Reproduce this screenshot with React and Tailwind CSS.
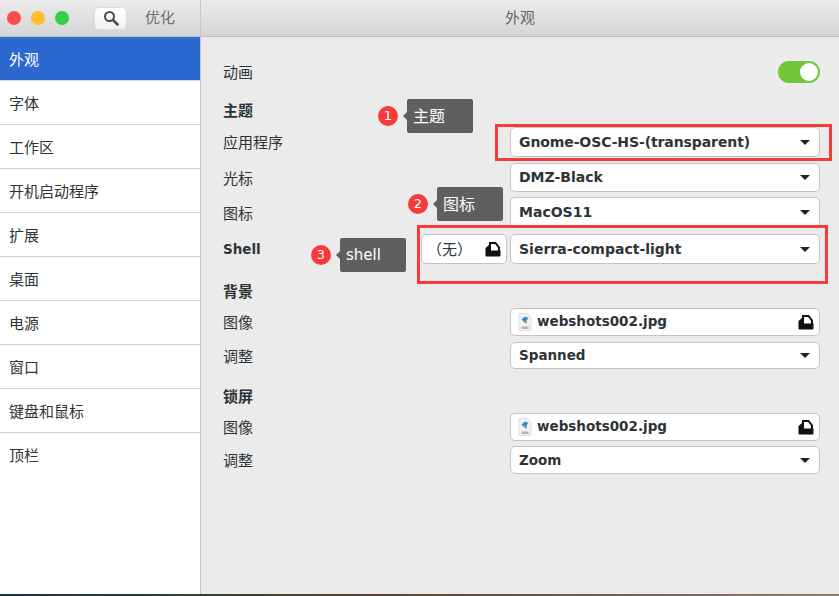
import React from "react";

const sidebarItems = ["外观", "字体", "工作区", "开机启动程序", "扩展", "桌面", "电源", "窗口", "键盘和鼠标", "顶栏"];
const font = "font-['DejaVu_Sans','Noto_Sans_CJK_SC',sans-serif]";

function OpenIcon() {
  return (
    <svg width="16" height="15" viewBox="0 0 16 15" className="shrink-0">
      <path d="M5 9V1h5.500L14 5.500V9" fill="#fff" stroke="#111" strokeWidth="2" />
      <path d="M.5 8.500h15V13.500a1 1 0 0 1-1 1H1.500a1 1 0 0 1-1-1z" fill="#111" />
      <path d="M.5 9V6L4 3v6z" fill="#111" />
    </svg>
  );
}

function FileIcon() {
  return (
    <svg width="14" height="18" viewBox="0 0 14 18" className="shrink-0">
      <path d="M1 .5h8.500L13 4v13.500H1z" fill="#f3f3f3" stroke="#dedede" />
      <path d="M3.500 6.500L7 3.500l3.500 1.500-2 2.500.5 3-3-1.500z" fill="#2f8fd6" />
      <path d="M5.500 8l2.500.5-.5 2.500z" fill="#e39a45" />
      <rect x="3.500" y="13.500" width="7" height="2.500" fill="#b5b5b5" />
    </svg>
  );
}

function Combo({ text, className = "text-[14px]" }) {
  return (
    <div className={`flex h-full w-[310px] items-center justify-between rounded-[5px] border border-[#c4c4c4] bg-white pl-2 pr-[9px] font-bold text-[#2e3436] ${className}`}>
      <span>{text}</span>
      <span className="h-0 w-0 border-x-[5px] border-t-[5px] border-x-transparent border-t-[#222]" />
    </div>
  );
}

function FileButton({ text }) {
  return (
    <div className="flex h-full w-[310px] items-center gap-[5px] rounded-[5px] border border-[#c4c4c4] bg-white pl-[7px] pr-[5px] text-[13.500px] font-bold text-[#2e3436]">
      <FileIcon />
      <span className="flex-1 -translate-y-px">{text}</span>
      <OpenIcon />
    </div>
  );
}

function Row({ label, bold, className, children }) {
  return (
    <div className={`flex items-center justify-between ${className}`}>
      <span className={`text-[#2e3436] ${bold ? "text-[13.500px] font-bold" : "pt-[3px] text-[15px]"}`}>{label}</span>
      <div className="flex h-full gap-[3px]">{children}</div>
    </div>
  );
}

function Heading({ text, className }) {
  return (
    <div className={`flex h-4 items-center text-[15px] font-bold text-[#2e3436] ${className}`}>{text}</div>
  );
}

function Note({ n, text, className, textClassName = "pt-[2px]" }) {
  return (
    <div className={`absolute flex items-center ${className}`}>
      <span className="flex h-5 w-5 items-center justify-center rounded-full bg-[#f73a3a] text-[13px] text-white">{n}</span>
      <span className="relative ml-[9px] flex h-[34px] w-[66px] items-center rounded-[2px] bg-[#5f5f5f] pl-[6px] text-white">
        <span className="absolute -left-[4px] top-[13px] h-0 w-0 border-y-[4px] border-r-[4px] border-y-transparent border-r-[#5f5f5f]" />
        <span className={textClassName}>{text}</span>
      </span>
    </div>
  );
}

export default function App() {
  return (
    <div className={`relative flex h-[596px] w-[839px] flex-col overflow-hidden bg-[#ebebeb] ${font}`}>
      <div className="flex h-[37px] shrink-0 border-b border-[#bfbfbf] bg-gradient-to-b from-[#ebebeb] to-[#d5d5d5]">
        <div className="flex w-[201px] shrink-0 items-center border-r border-[#c8c8c8] pl-[7px]">
          <span className="h-[14px] w-[14px] rounded-full bg-[#fc4c50]" />
          <span className="ml-[10px] h-[14px] w-[14px] rounded-full bg-[#fdbf2f]" />
          <span className="ml-[10px] h-[14px] w-[14px] rounded-full bg-[#33d33f]" />
          <div className="ml-[25px] flex h-[23px] w-[33px] items-center justify-center rounded-[5px] border border-[#dcdcdc] bg-gradient-to-b from-white to-[#f2f2f2]">
            <svg width="16" height="16" viewBox="0 0 16 16" fill="none" stroke="#4a4a4a" strokeWidth="2">
              <circle cx="6.500" cy="6.500" r="4.500" />
              <path d="M10 10l4.500 4.500" strokeLinecap="round" strokeWidth="2.500" />
            </svg>
          </div>
          <span className="ml-[18px] text-[15px] text-[#6e6e6e]">优化</span>
        </div>
        <div className="flex flex-1 items-center justify-center text-[15px] text-[#666]">外观</div>
      </div>

      <div className="flex min-h-0 flex-1">
        <div className="w-[201px] shrink-0 border-r border-[#c8c8c8] bg-white">
          {sidebarItems.map((item, i) => (
            <div
              key={item}
              className={`flex h-[44px] items-center border-b pl-[9px] pt-[3px] text-[15px] ${i === 0 ? "border-[#d8d8d8] bg-[#2b68d0] text-white" : i === sidebarItems.length - 1 ? "border-transparent text-[#2e3436]" : "border-[#d0d0d0] text-[#2e3436]"}`}
            >
              {item}
            </div>
          ))}
        </div>

        <div className="flex-1 pl-[22px] pr-[19px]">
          <Row label="动画" className="mt-[24px] h-[22px]">
            <div className="flex h-[22px] w-[42px] items-center justify-end rounded-full bg-[#72c63a] pr-[2px]">
              <span className="h-[18px] w-[18px] rounded-full bg-white" />
            </div>
          </Row>
          <Heading text="主题" className="mt-[20px]" />
          <Row label="应用程序" className="mt-[8px] h-[30px]"><Combo text="Gnome-OSC-HS-(transparent)" className="text-[14px] tracking-[-0.1px]" /></Row>
          <Row label="光标" className="mt-[6px] h-[29px]"><Combo text="DMZ-Black" /></Row>
          <Row label="图标" className="mt-[5px] h-[31px]"><Combo text="MacOS11" /></Row>
          <Row label="Shell" bold className="mt-[6px] h-[30px]">
            <div className="flex h-full w-[86px] items-center justify-between rounded-[5px] border border-[#c4c4c4] bg-white pl-[5px] pr-[5px] text-[15px] text-[#2e3436]">
              <span className="pt-[3px]">（无）</span>
              <OpenIcon />
            </div>
            <Combo text="Sierra-compact-light" />
          </Row>
          <Heading text="背景" className="mt-[20px]" />
          <Row label="图像" className="mt-[8px] h-[28px]"><FileButton text="webshots002.jpg" /></Row>
          <Row label="调整" className="mt-[6px] h-[27px]"><Combo text="Spanned" className="text-[13.500px]" /></Row>
          <Heading text="锁屏" className="mt-[20px]" />
          <Row label="图像" className="mt-[8px] h-[28px]"><FileButton text="webshots002.jpg" /></Row>
          <Row label="调整" className="mt-[5px] h-[28px]"><Combo text="Zoom" className="text-[13.500px]" /></Row>
        </div>
      </div>

      <div className="h-[2px] shrink-0 bg-gradient-to-r from-[#12343a] via-[#5a4a30] to-[#8a8070]" />

      <div className="absolute left-[495px] top-[124px] h-[37px] w-[337px] border-[3px] border-[#f73a3a]" />
      <div className="absolute left-[417px] top-[225px] h-[59px] w-[411px] border-[3px] border-[#f73a3a]" />
      <Note n="1" text="主题" className="left-[378px] top-[99px]" />
      <Note n="2" text="图标" className="left-[408px] top-[187px]" />
      <Note n="3" text="shell" textClassName="text-[15px]" className="left-[311px] top-[238px]" />
    </div>
  );
}
